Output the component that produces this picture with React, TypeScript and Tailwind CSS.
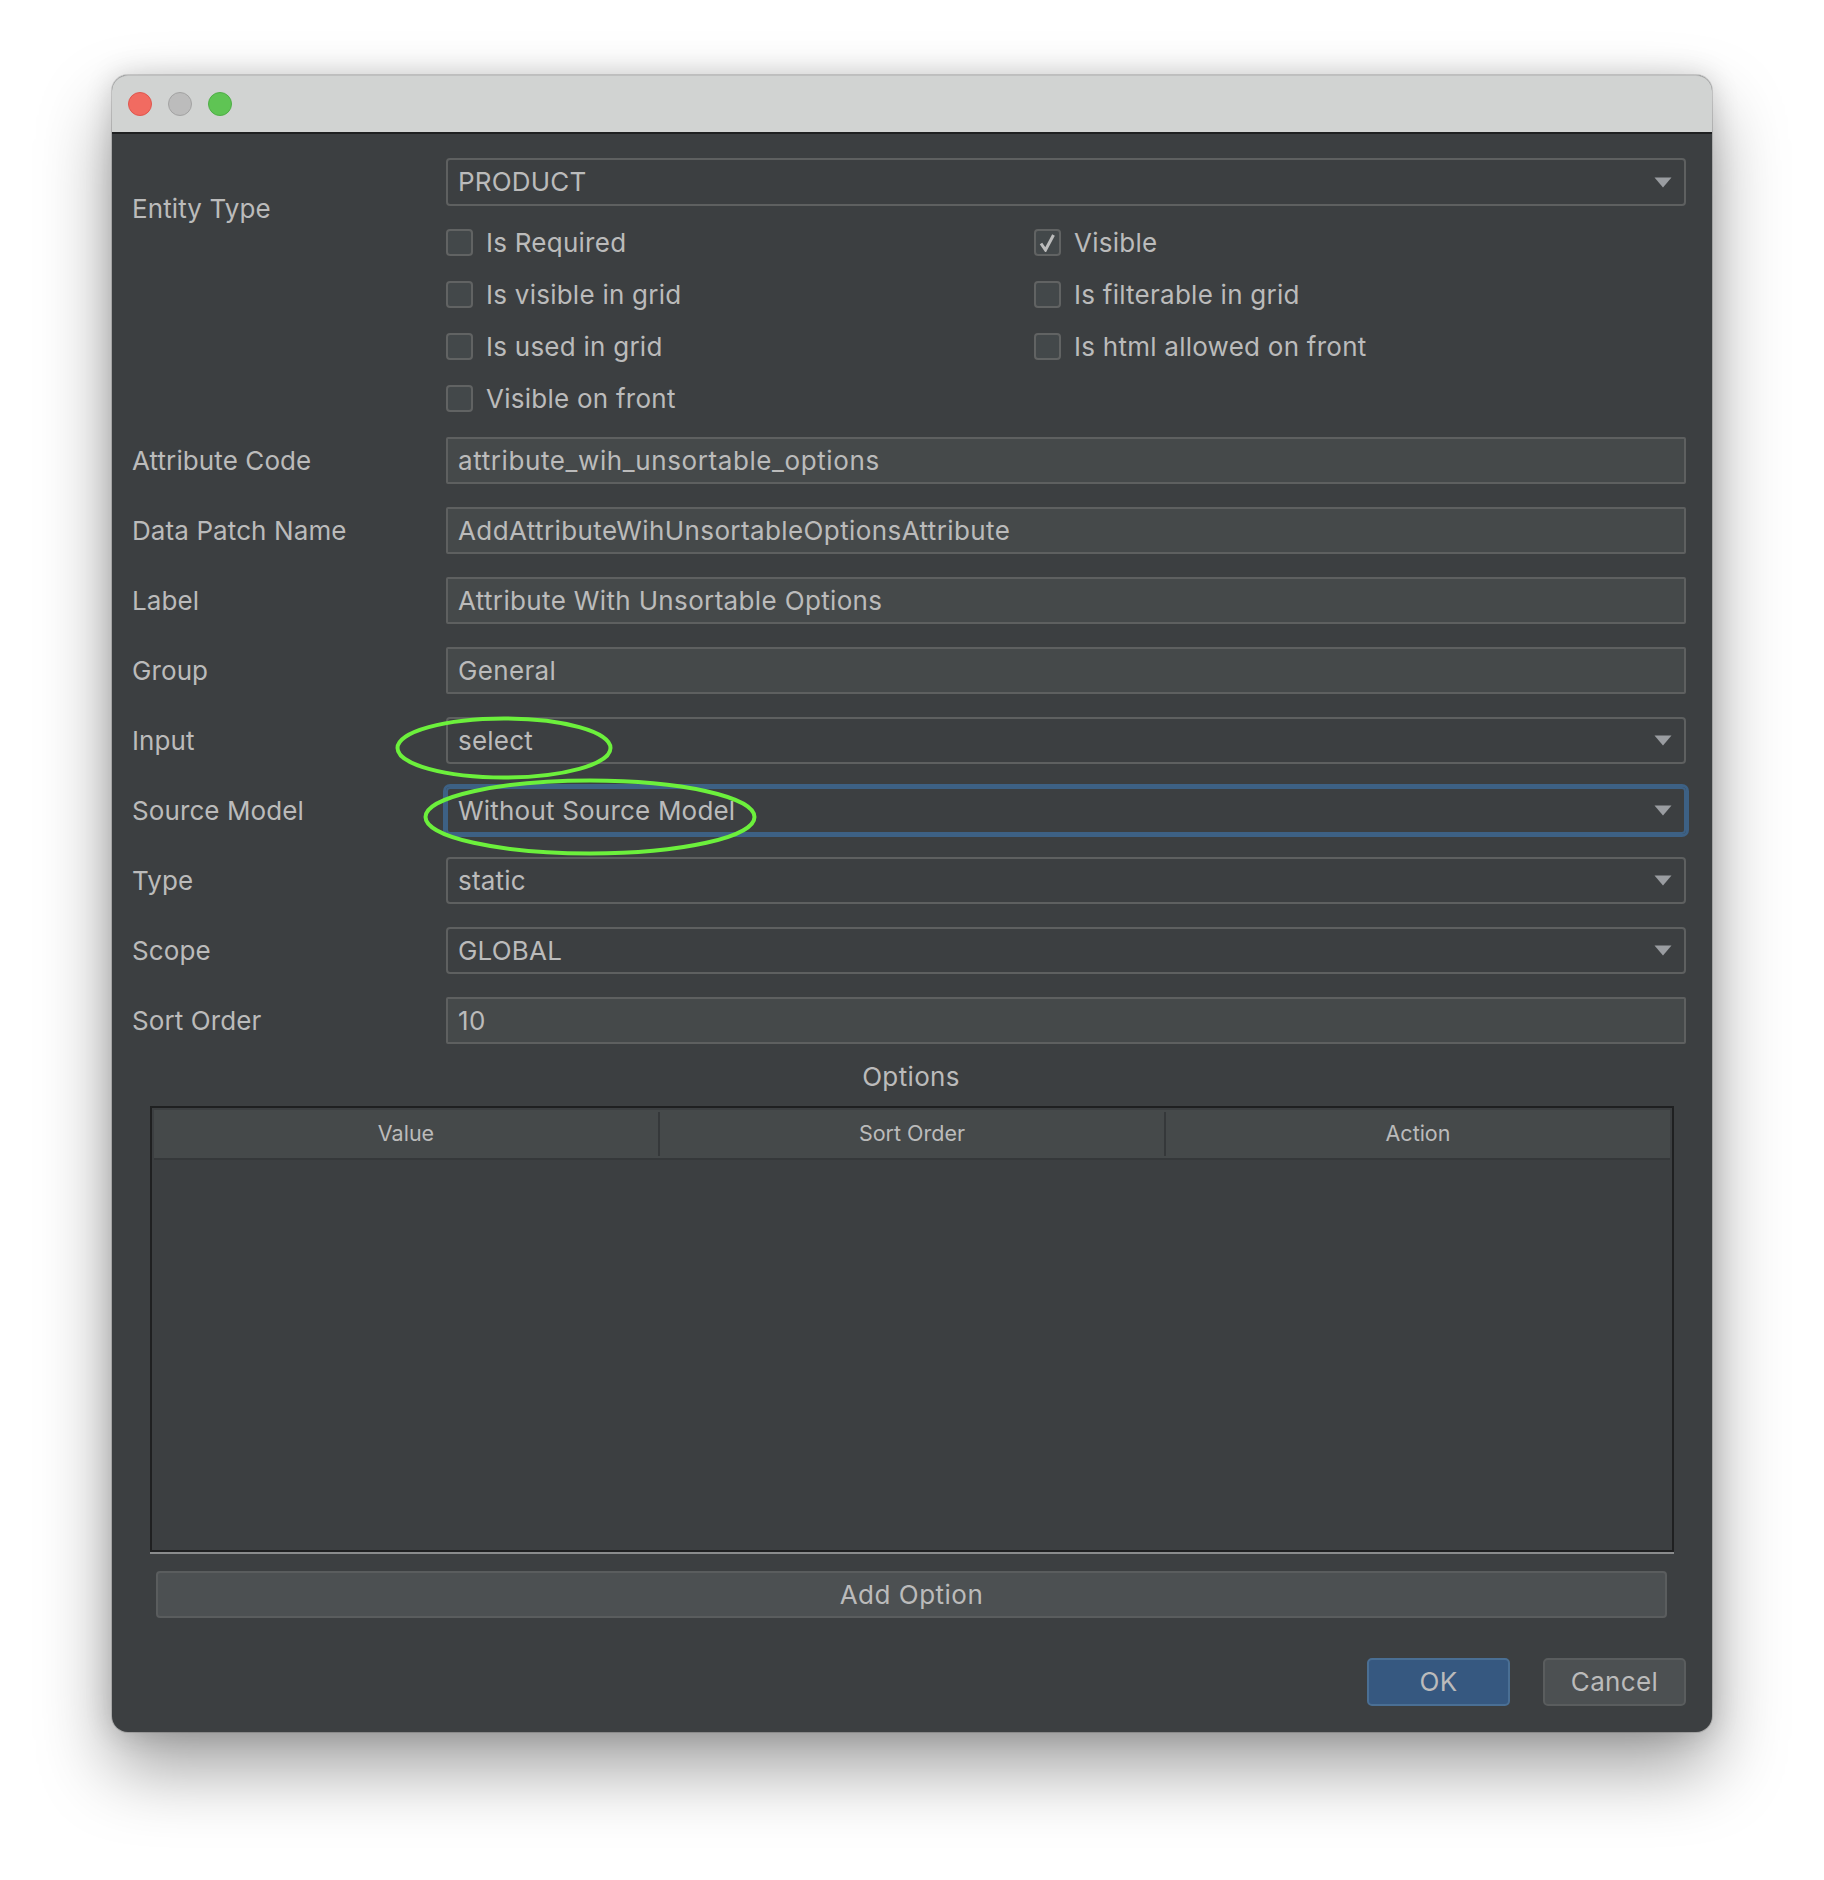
const LEFT_CHECKS = ["Is Required", "Is visible in grid", "Is used in grid", "Visible on front"];
const RIGHT_CHECKS = ["Visible", "Is filterable in grid", "Is html allowed on front"];

function Arrow() {
  return (
    <svg width="18" height="11" viewBox="0 0 18 11" className="shrink-0">
      <path d="M0.5 0.5H17.5L9 10.5Z" fill="#9a9da1" />
    </svg>
  );
}

function Check({ label, checked }: { label: string; checked?: boolean }) {
  return (
    <div className="flex h-[27px] items-center gap-[13px] tracking-[0.25px]">
      <div className="flex h-[27px] w-[27px] items-center justify-center rounded-[4px] border-2 border-[#616363] bg-[#43484a]">
        {checked && (
          <svg width="17" height="18" viewBox="0 0 17 18" fill="none">
            <path d="M2 9.5L6.5 16L14.5 1" stroke="#bcbcbc" strokeWidth="3" />
          </svg>
        )}
      </div>
      <span>{label}</span>
    </div>
  );
}

function SelectField({ value, focused, className }: { value: string; focused?: boolean; className?: string }) {
  const border = focused ? "border-[#3d6185] shadow-[0_0_0_3px_#3d6185]" : "border-[#5e6060]";
  return (
    <div
      className={
        "flex h-[47px] items-center justify-between rounded-[4px] border-2 pl-[10px] pr-[12px] tracking-[0.2px] " +
        border +
        " " +
        (className ?? "")
      }
    >
      <span>{value}</span>
      <Arrow />
    </div>
  );
}

function TextField({ value, className }: { value: string; className?: string }) {
  return (
    <div className={"flex h-[47px] items-center rounded-[2px] border-2 border-[#5e6060] bg-[#45494a] pl-[10px] " + (className ?? "")}>
      {value}
    </div>
  );
}

function Row({ label, children }: { label: string; children: React.ReactNode }) {
  return (
    <div className="flex h-[47px] items-center">
      <div className="w-[314px] shrink-0 tracking-[0.1px]">{label}</div>
      <div className="flex-1">{children}</div>
    </div>
  );
}

export default function App() {
  return (
    <div className="h-[1880px] w-[1824px] bg-white pl-[112px] pt-[75px] font-['Inter',sans-serif] text-[26px] leading-none tracking-[0.35px] text-[#bbbbbb]">
      <div className="relative flex h-[1657px] w-[1600px] flex-col rounded-[16px] bg-[#3c3f41] shadow-[0_0_0_1px_rgba(0,0,0,0.14),0_36px_72px_rgba(0,0,0,0.38),0_0_28px_rgba(0,0,0,0.16)]">
        <div className="flex h-[59px] shrink-0 items-center gap-[16px] rounded-t-[16px] border-b-2 border-t border-b-[#1f2021] border-t-[#bfc0c0] bg-[#d1d3d2] pl-[16px]">
          <div className="h-[24px] w-[24px] rounded-full border border-[#e0564e] bg-[#f16b61]" />
          <div className="h-[24px] w-[24px] rounded-full border border-[#a3a3a3] bg-[#bcbcbc]" />
          <div className="h-[24px] w-[24px] rounded-full border border-[#4fae47] bg-[#5fc454]" />
        </div>

        <div className="flex flex-1 flex-col pl-[20px] pr-[26px] pt-[24px]">
          <div className="flex">
            <div className="w-[314px] shrink-0 pt-[38px] tracking-[0.1px]">Entity Type</div>
            <div className="flex-1">
              <SelectField value="PRODUCT" className="h-[48px]" />
              <div className="mt-[23px] flex">
                <div className="flex w-[588px] flex-col gap-[25px]">
                  {LEFT_CHECKS.map((c) => (
                    <Check key={c} label={c} />
                  ))}
                </div>
                <div className="flex flex-col gap-[25px]">
                  {RIGHT_CHECKS.map((c) => (
                    <Check key={c} label={c} checked={c === "Visible"} />
                  ))}
                </div>
              </div>
            </div>
          </div>

          <div className="mt-[25px] flex flex-col gap-[23px]">
            <Row label="Attribute Code">
              <TextField value="attribute_wih_unsortable_options" className="tracking-[0.6px]" />
            </Row>
            <Row label="Data Patch Name">
              <TextField value="AddAttributeWihUnsortableOptionsAttribute" className="tracking-[0.4px]" />
            </Row>
            <Row label="Label">
              <TextField value="Attribute With Unsortable Options" />
            </Row>
            <Row label="Group">
              <TextField value="General" />
            </Row>
            <Row label="Input">
              <SelectField value="select" />
            </Row>
            <Row label="Source Model">
              <SelectField value="Without Source Model" focused />
            </Row>
            <Row label="Type">
              <SelectField value="static" />
            </Row>
            <Row label="Scope">
              <SelectField value="GLOBAL" />
            </Row>
            <Row label="Sort Order">
              <TextField value="10" />
            </Row>
          </div>

          <div className="ml-[4px] mt-[20px] text-center">Options</div>

          <div className="ml-[18px] mr-[12px] mt-[16px] flex h-[446px] flex-col border-2 border-[#1f2021] shadow-[0_2px_0_#8a8c8d]">
            <div className="mx-[2px] mt-[2px] flex h-[50px] shrink-0 items-center border-b-2 border-[#35383a] bg-[#45494a] text-[21.5px] tracking-normal">
              <div className="w-[504px] text-center">Value</div>
              <div className="h-[44px] w-[2px] bg-[#35383a]" />
              <div className="w-[504px] text-center">Sort Order</div>
              <div className="h-[44px] w-[2px] bg-[#35383a]" />
              <div className="flex-1 text-center">Action</div>
            </div>
          </div>

          <button className="ml-[24px] mr-[19px] mt-[19px] h-[47px] rounded-[4px] border-2 border-[#5a5d5e] bg-[#4c5052] text-center tracking-[0.5px]">
            Add Option
          </button>

          <div className="mt-[40px] flex justify-end gap-[33px]">
            <button className="h-[48px] w-[143px] rounded-[5px] border-2 border-[#4a6f94] bg-[#365880]">OK</button>
            <button className="h-[48px] w-[143px] rounded-[5px] border-2 border-[#5a5d5e] bg-[#4c5052]">Cancel</button>
          </div>
        </div>

        {/* hand drawn highlights on top of the dialog */}
        <svg className="pointer-events-none absolute left-[282px] top-[640px]" width="364" height="142" viewBox="0 0 364 142" fill="none">
          <ellipse cx="110" cy="33" rx="106.5" ry="29.5" stroke="#6cf03c" strokeWidth="4" />
          <ellipse cx="196" cy="102" rx="164.5" ry="36.5" stroke="#6cf03c" strokeWidth="4" />
        </svg>
      </div>
    </div>
  );
}
